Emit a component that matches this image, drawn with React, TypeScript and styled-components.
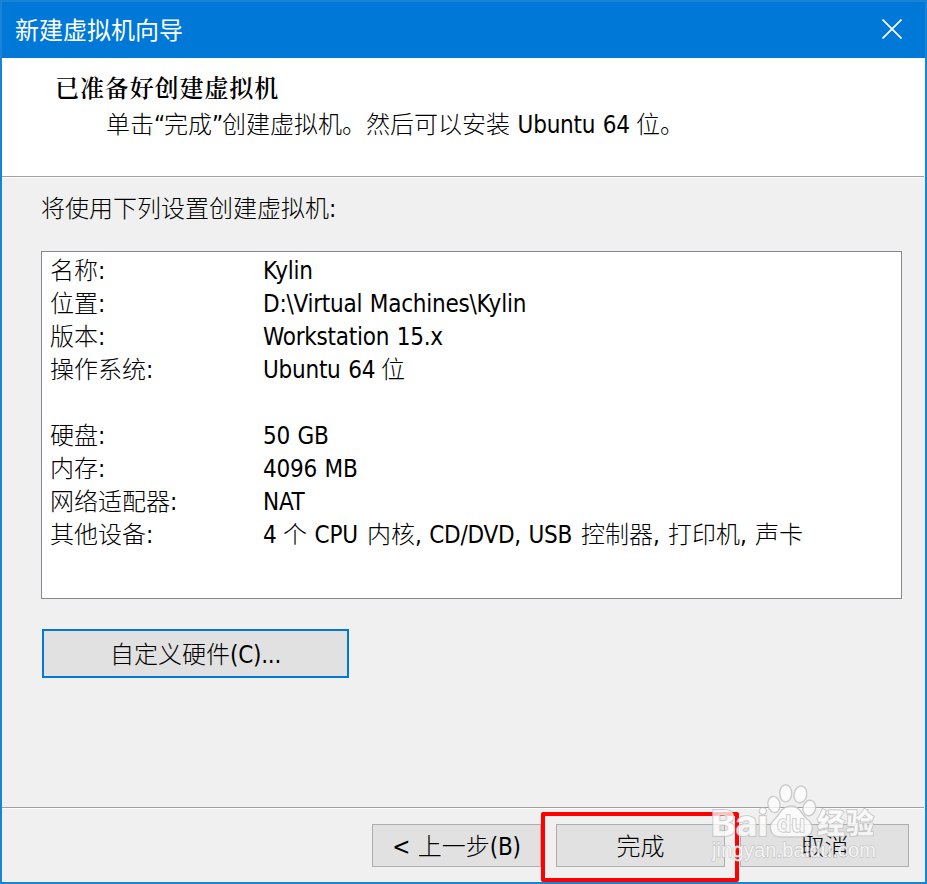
import React from 'react';
import styled, { createGlobalStyle } from 'styled-components';

const GlobalStyle = createGlobalStyle`
  * { box-sizing: border-box; }
  body { margin: 0; }
`;

const Window = styled.div`
  position: relative;
  display: flex;
  flex-direction: column;
  width: 927px;
  height: 884px;
  border: 2px solid #1883d7;
  background: #f0f0f0;
  color: #000;
  font: 300 24px/33px 'Noto Sans CJK SC', sans-serif;
  overflow: hidden;
`;

const TitleBar = styled.header`
  display: flex;
  align-items: center;
  justify-content: space-between;
  height: 56px;
  padding: 0 23px 2px 13px;
  background: #0078d7;
  color: #fff;
`;

const Title = styled.h1`
  margin: 0;
  padding-bottom: 2px;
  font: 400 24px/33px 'Noto Sans CJK SC', sans-serif;
`;

const CloseButton = styled.button`
  display: flex;
  padding: 0;
  border: 0;
  background: none;
  color: #fff;
`;

const Banner = styled.section`
  height: 118px;
  padding: 12px 0 0 53px;
  background: #fff;
`;

const Heading = styled.h2`
  margin: 0 0 4px;
  font: 600 24px/33px 'Noto Serif CJK SC', 'Noto Sans CJK SC', sans-serif;
  letter-spacing: 0.9px;
`;

const Divider = styled.hr`
  flex: none;
  height: 2px;
  margin: 0 1px 0 0;
  border: 0;
  border-top: 1px solid #a0a0a0;
  background: #fff;
`;

const Line = styled.span<{ $indent?: number }>`
  display: flex;
  align-items: baseline;
  height: 33px;
  padding-left: ${(p) => p.$indent ?? 0}px;
  line-height: 31px;
  white-space: pre;

  /* keeps the Han baseline on lines that hold Latin text only */
  &::before {
    content: '\\200b';
    font-family: 'Noto Sans CJK SC', sans-serif;
  }
`;

const Han = styled.span`
  font-family: 'Noto Sans CJK SC', sans-serif;
`;

const Latin = styled.span<{ $width?: number }>`
  flex: none;
  width: ${(p) => (p.$width ? `${p.$width}px` : 'auto')};
  font-family: 'DejaVu Sans Condensed', 'DejaVu Sans', sans-serif;
  font-stretch: condensed;
  font-weight: 400;
  letter-spacing: -0.25px;
  word-spacing: 1px;
`;

const Body = styled.main`
  flex: 1;
  padding: 13px 23px 0 39px;
`;

const Settings = styled.dl`
  height: 348px;
  margin: 27px 0 30px;
  padding: 1px 8px;
  border: 1px solid #828790;
  background: #fff;
`;

const Setting = styled.div<{ $gap?: boolean }>`
  display: grid;
  grid-template-columns: 213px 1fr;
  height: 33px;
  margin-top: ${(p) => (p.$gap ? 33 : 0)}px;
`;

const Term = styled.dt``;
const Value = styled.dd`
  margin: 0;
`;

const PushButton = styled.button<{ $focused?: boolean }>`
  display: flex;
  justify-content: center;
  align-items: center;
  width: ${(p) => (p.$focused ? 307 : 169)}px;
  height: ${(p) => (p.$focused ? 49 : 43)}px;
  margin-left: ${(p) => (p.$focused ? 1 : 0)}px;
  padding: 0;
  border: ${(p) => (p.$focused ? '2px solid #0078d7' : '1px solid #adadad')};
  background: #e1e1e1;
  color: #000;
  font: inherit;
`;

const Footer = styled.footer`
  display: flex;
  justify-content: flex-end;
  gap: 15px;
  height: 73px;
  padding: 15px 16px 0 0;
`;

const Highlight = styled.div`
  position: absolute;
  left: 539px;
  top: 810px;
  width: 198px;
  height: 70px;
  border: 4px solid #fe0000;
  border-radius: 2px;
`;

const Watermark = styled.svg`
  position: absolute;
  left: 698px;
  top: 772px;
`;

type Run = { text: string; latin?: boolean; width?: number };
const h = (text: string): Run => ({ text });
const l = (text: string, width?: number): Run => ({ text, latin: true, width });

const Runs = ({ runs, indent }: { runs: Run[]; indent?: number }) => (
  <Line $indent={indent}>
    {runs.map((r, i) =>
      r.latin ? (
        <Latin key={i} $width={r.width}>{r.text}</Latin>
      ) : (
        <Han key={i}>{r.text}</Han>
      ),
    )}
  </Line>
);

const settings: { term: string; value: Run[]; gap?: boolean }[] = [
  { term: '名称', value: [l('Kylin')] },
  { term: '位置', value: [l('D:\\Virtual Machines\\Kylin')] },
  { term: '版本', value: [l('Workstation 15.x')] },
  { term: '操作系统', value: [l('Ubuntu 64 ', 118), h('位')] },
  { term: '硬盘', value: [l('50 GB')], gap: true },
  { term: '内存', value: [l('4096 MB')] },
  { term: '网络适配器', value: [l('NAT')] },
  {
    term: '其他设备',
    value: [
      l('4 ', 20), h('个'), l(' CPU ', 60), h('内核'), l(', CD/DVD, USB ', 166),
      h('控制器'), l(', ', 15), h('打印机'), l(', ', 15), h('声卡'),
    ],
  },
];

const BaiduMark = () => (
  <Watermark width="190" height="100" viewBox="700 774 190 100" aria-hidden="true">
    <g fill="#fff" fillOpacity="0.75" stroke="#c0c0c0" strokeOpacity="0.8" strokeWidth="1.4">
      <ellipse cx="774" cy="804.5" rx="6" ry="8.2" transform="rotate(-12 774 804.5)" />
      <ellipse cx="785.7" cy="793.3" rx="6" ry="8.6" />
      <ellipse cx="800.4" cy="794.5" rx="6.3" ry="8.6" transform="rotate(12 800.4 794.5)" />
      <ellipse cx="809.3" cy="808" rx="6.3" ry="7.8" transform="rotate(14 809.3 808)" />
      <path d="M791 806c-9 0-11 8-16 13-5 4-6 9-3 14 3 5 10 4 19 4s17 1 20-4c3-6 0-11-4-14-6-5-7-13-16-13z" />
    </g>
    <g fill="#fff" fillOpacity="0.75" stroke="#b8b8b8" strokeOpacity="0.75" strokeWidth="1.6" paintOrder="stroke" fontWeight="800">
      <text x="711" y="836" fontFamily="Inter, sans-serif" fontSize="36" textLength="57" lengthAdjust="spacingAndGlyphs">Bai</text>
      <text x="777" y="832" fontFamily="Inter, sans-serif" fontSize="23" fontWeight="600" textLength="28" lengthAdjust="spacingAndGlyphs">du</text>
      <text x="817" y="834" fontFamily="'Noto Sans CJK SC', sans-serif" fontSize="28" textLength="57">经验</text>
    </g>
    <text
      x="712" y="857" fontFamily="'Liberation Sans', sans-serif" fontSize="20" textLength="164"
      fill="#fff" fillOpacity="0.8" stroke="#bcbcbc" strokeOpacity="0.7" strokeWidth="1.3" paintOrder="stroke"
    >
      jingyan.baidu.com
    </text>
  </Watermark>
);

export default function App() {
  return (
    <>
      <GlobalStyle />
      <Window>
        <TitleBar>
          <Title>新建虚拟机向导</Title>
          <CloseButton aria-label="关闭">
            <svg width="20" height="20" viewBox="0 0 20 20" stroke="currentColor" strokeWidth="1.7">
              <path d="M.5.5l19 19M19.5.5l-19 19" />
            </svg>
          </CloseButton>
        </TitleBar>
        <Banner>
          <Heading>已准备好创建虚拟机</Heading>
          <Runs
            indent={51}
            runs={[h('单击'), l('“', 10), h('完成'), l('”', 10), h('创建虚拟机。然后可以安装'), l(' Ubuntu 64 ', 126), h('位。')]}
          />
        </Banner>
        <Divider />
        <Body>
          <Runs runs={[h('将使用下列设置创建虚拟机'), l(':')]} />
          <Settings>
            {settings.map((s) => (
              <Setting key={s.term} $gap={s.gap}>
                <Term><Runs runs={[h(s.term), l(':')]} /></Term>
                <Value><Runs runs={s.value} /></Value>
              </Setting>
            ))}
          </Settings>
          <PushButton $focused>
            <Runs runs={[h('自定义硬件'), l('(C)...')]} />
          </PushButton>
        </Body>
        <Divider />
        <Footer>
          <PushButton><Runs runs={[l('< '), h('上一步'), l('(B)')]} /></PushButton>
          <PushButton><Runs runs={[h('完成')]} /></PushButton>
          <PushButton><Runs runs={[h('取消')]} /></PushButton>
        </Footer>
        <Highlight />
        <BaiduMark />
      </Window>
    </>
  );
}
